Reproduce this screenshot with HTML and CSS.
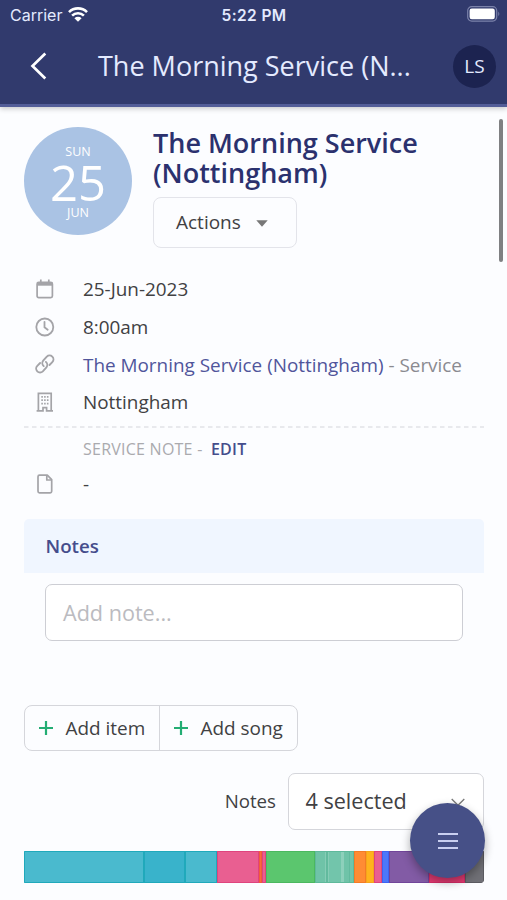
FILE: index.html
```html
<!DOCTYPE html>
<html lang="en">
<head>
<meta charset="utf-8">
<title>The Morning Service (Nottingham)</title>
<link rel="stylesheet" href="styles.css">
</head>
<body>
<div class="app">
  <header class="header">
    <div class="status">
      <div class="carrier"><span>Carrier</span>
        <svg class="wifi" viewBox="0 0 20 15"><path d="M1 5.1a12.8 12.8 0 0 1 18 0M4.1 8.6a8.4 8.4 0 0 1 11.8 0" fill="none" stroke="#fff" stroke-width="2.6"/><path d="M6.4 11.3a5.2 5.2 0 0 1 7.2 0L10 14.8z" fill="#fff"/></svg>
      </div>
      <div class="clock">5:22 PM</div>
      <div class="power"><svg class="battery" viewBox="0 0 34 16"><rect x=".7" y=".7" width="29" height="14.4" rx="4" fill="none" stroke="#7b82aa" stroke-width="1.2"/><rect x="2.6" y="2.6" width="25.2" height="10.6" rx="2.2" fill="#fff"/><path d="M31.3 5.5q2 2.4 0 4.8z" fill="#7b82aa"/></svg></div>
    </div>
    <div class="nav">
      <svg class="back" viewBox="0 0 18 28"><path d="M15.3 1.5 2.5 14l12.8 12.5" fill="none" stroke="#fff" stroke-width="2.7"/></svg>
      <div class="nav-title">The Morning Service (N...</div>
      <div class="avatar">LS</div>
    </div>
  </header>
  <main class="content">
    <section class="hero">
      <div class="date-badge"><span class="small">SUN</span><span class="day">25</span><span class="small">JUN</span></div>
      <div class="hero-text">
        <h1>The Morning Service<br>(Nottingham)</h1>
        <button class="actions"><span>Actions</span><svg class="caret" viewBox="0 0 12 7"><path d="M.3.3h11.4L6 6.7z" fill="#777"/></svg></button>
      </div>
    </section>
    <section class="details">
      <div class="row"><svg class="icon" viewBox="0 0 20 20"><g fill="none" stroke="#a4a4a8" stroke-width="1.7"><rect x="2.1" y="3.3" width="15.3" height="15.4" rx="1.6"/><path d="M2 5.2h15.5" stroke-width="3"/><path d="M5.8.5v4M13.8.5v4"/></g></svg><span>25-Jun-2023</span></div>
      <div class="row"><svg class="icon" viewBox="0 0 20 20"><g fill="none" stroke="#a4a4a8" stroke-width="1.8"><circle cx="9.8" cy="10" r="8.5"/><path d="M9.5 4.8v5.4l3.2 2.5" stroke-linecap="round"/></g></svg><span>8:00am</span></div>
      <div class="row"><svg class="icon" viewBox="0 0 20 20"><g fill="none" stroke="#a4a4a8" stroke-width="1.9" stroke-linecap="round"><path d="M8.7 12.1a4 4 0 0 1-.5-5.5l3.6-3.9a3.85 3.85 0 0 1 5.5 5.5l-2.8 2.8"/><path d="M10.9 7.9a4 4 0 0 1 .5 5.5l-3.6 3.9a3.85 3.85 0 0 1-5.5-5.5L5.1 9"/></g></svg><span class="service"><a>The Morning Service (Nottingham)</a> - Service</span></div>
      <div class="row"><svg class="icon" viewBox="0 0 20 20"><g fill="none" stroke="#a4a4a8"><path d="M3.4 18V1.4h12.8V18M1.6 18.9H8v-3.2h3.6v3.2H18" stroke-width="1.7"/><path d="M6.3 4.8h7.2M6.3 8.2h7.2M6.3 11.6h7.2" stroke-width="1.8" stroke-dasharray="1.6 1.2"/></g></svg><span>Nottingham</span></div>
    </section>
    <svg class="rule" viewBox="0 0 460 2"><path d="M0 1h460" stroke="#e1e2e7" stroke-width="1.4" stroke-dasharray="4.5 3.5"/></svg>
    <div class="note-label">SERVICE NOTE - <b>EDIT</b></div>
    <div class="row note-row"><svg class="icon" viewBox="0 0 20 20"><g fill="none" stroke="#a4a4a8" stroke-width="1.7" stroke-linejoin="round"><path d="M12.3 1.2H4.5q-1.5 0-1.5 1.5v14.6q0 1.5 1.5 1.5h10.7q1.5 0 1.5-1.5V5.6z"/><path d="M11.8 1.4V6h4.8"/></g></svg><span>-</span></div>
    <h2>Notes</h2>
    <div class="note-input">Add note...</div>
    <div class="button-group">
      <button><svg class="plus" viewBox="0 0 14 14"><path d="M7 0v14M0 7h14"/></svg>Add item</button>
      <button><svg class="plus" viewBox="0 0 14 14"><path d="M7 0v14M0 7h14"/></svg>Add song</button>
    </div>
    <div class="filter"><span>Notes</span><div class="select"><span>4 selected</span><svg class="chevron" viewBox="0 0 14 9"><path d="m.7 1 6.3 6.3L13.3 1" fill="none" stroke="#777" stroke-width="1.3"/></svg></div></div>
    <div class="timeline">
      <i class="teal s1"></i><i class="teal dark s2"></i><i class="teal s3"></i><i class="pink s4"></i><i class="tangerine s5"></i><i class="pink s6"></i><i class="green s7"></i><i class="mint s8"></i><i class="orange s9"></i><i class="yellow s10"></i><i class="pink s11"></i><i class="blue s12"></i><i class="purple s13"></i><i class="rose s14"></i><i class="gray s15"></i>
    </div>
  </main>
  <div class="scrollbar"></div>
  <button class="fab" aria-label="Menu"><svg viewBox="0 0 20 16"><path d="M0 1h20M0 8h20M0 15h20" stroke="#c9cff0" stroke-width="2"/></svg></button>
</div>
</body>
</html>
```
FILE: styles.css
```css
* { box-sizing: border-box; }
body { margin: 0; font-family: "Open Sans", sans-serif; color: #414143; background: #fcfdff; }
button { font: inherit; color: inherit; padding: 0; background: none; border: 0; }
svg { display: block; flex: none; }
.app { position: relative; width: 507px; height: 900px; overflow: hidden; }
.header { height: 107px; background: #313a6d; border-bottom: 3px solid #535d98; box-shadow: 0 2px 5px #0003; color: #e4eaff; }
.status { display: grid; grid-template-columns: 1fr 1fr 1fr; align-items: center; height: 30px; padding: 0 6px 0 10px; font-family: Inter, sans-serif; font-size: 16px; }
.carrier { display: flex; align-items: center; gap: 6px; }
.wifi { width: 20px; height: 15px; margin-top: -1px; }
.clock { text-align: center; font-weight: 600; font-size: 15.5px; letter-spacing: .4px; margin-left: -3px; }
.power { display: flex; justify-content: flex-end; }
.battery { width: 34px; height: 16px; margin-top: -2px; }
.nav { display: flex; align-items: center; height: 72px; padding: 0 11px 0 30px; }
.back { width: 18px; height: 28px; }
.nav-title { margin-left: 50px; flex: 1; font-size: 27px; line-height: 36px; white-space: nowrap; }
.avatar { width: 43px; height: 43px; border-radius: 50%; background: #1c2350; display: flex; align-items: center; justify-content: center; font-size: 19px; font-weight: 500; }
.content { padding: 20px 23px 0 24px; }
.hero { display: flex; height: 121px; }
.date-badge { width: 108px; height: 108px; border-radius: 50%; background: #aac3e4; color: #fff; display: flex; flex-direction: column; align-items: center; padding-top: 17px; }
.small { font-size: 12.5px; line-height: 15px; }
.day { font-size: 49px; line-height: 46px; }
.hero-text { margin-left: 21px; }
h1 { margin: 1px 0 9px; font-size: 27px; line-height: 30px; font-weight: 600; color: #2b316e; white-space: nowrap; }
.actions { width: 144px; height: 51px; border: 1.5px solid #e3e4ea; border-radius: 8px; display: flex; align-items: center; padding-left: 22px; gap: 15px; font-size: 19px; }
.actions span { margin-top: -1px; }
.caret { width: 12px; height: 7px; margin-top: 1px; }
.details { padding-top: 22.4px; }
.row { display: flex; align-items: center; height: 37.75px; padding-left: 11px; font-size: 18.9px; }
.icon { width: 20px; height: 20px; margin-right: 28px; }
.details .icon { margin-top: -1px; }
.row span { white-space: nowrap; margin-top: -.5px; }
.service { color: #8a8a90; }
.service a { color: #50559b; }
.rule { width: 460px; height: 2px; margin-top: 4.6px; }
.note-label { padding-left: 59px; margin-top: 9px; font-size: 16px; line-height: 24px; font-weight: 500; letter-spacing: .24px; color: #aaaaae; }
.note-label b { margin-left: 4px; font-weight: 600; color: #454d8c; }
.note-row { margin-top: 4px; }
h2 { margin: 16px 0 0; height: 54px; border-radius: 5px 5px 0 0; background: #f0f6ff; padding-left: 21.5px; font-size: 18.7px; line-height: 54px; font-weight: 600; color: #454d8c; }
.note-input { height: 57px; margin: 11px 21.5px 0 21px; border: 1.5px solid #cdced4; border-radius: 7px; background: #fff; padding-left: 17px; font-size: 21.6px; line-height: 56px; color: #bbbbc0; }
.button-group { margin-top: 64px; width: 274px; height: 46px; display: flex; border: 1.5px solid #d5d6db; border-radius: 8px; }
.button-group button { width: 137px; display: flex; align-items: center; padding-left: 14px; font-size: 18.95px; white-space: nowrap; }
.button-group button:first-child { width: 135px; border-right: 1.5px solid #d5d6db; }
.plus { width: 14px; height: 14px; margin-right: 12.5px; stroke: #23ad73; stroke-width: 2.2; }
.filter { display: flex; justify-content: flex-end; align-items: center; margin-top: 22px; gap: 12px; font-size: 18.7px; }
.filter span { margin-top: -2px; }
.select { width: 196px; height: 57px; display: flex; align-items: center; justify-content: space-between; border: 1.5px solid #d5d6db; border-radius: 7px; background: #fff; padding: 0 18px 0 16.5px; font-size: 21.6px; }
.chevron { width: 14px; height: 9px; margin-top: 2px; }
.timeline { display: flex; height: 32px; margin-top: 21px; border-radius: 1px 1px 4px 1px; overflow: hidden; }
.timeline i { display: block; flex: none; background: var(--fill); border: 1px solid var(--edge); }
.teal { --fill: #4abace; --edge: #20a9bb; }
.dark { --fill: #39b3cb; }
.pink { --fill: #e95f91; --edge: #df447e; }
.tangerine { --fill: #ff653f; --edge: #f15b39; }
.green { --fill: #5bc66e; --edge: #4bb85f; }
.mint { --fill: #6fc3a8; --edge: #5eb99b; }
.orange { --fill: #ff8c34; --edge: #f37c26; }
.yellow { --fill: #ffb31d; --edge: #f5a51b; }
.blue { --fill: #4c78fb; --edge: #3c63f2; }
.purple { --fill: #825ba5; --edge: #71459a; }
.rose { --fill: #e53b73; --edge: #d52d67; }
.gray { --fill: #707076; --edge: #5b5b61; }
.s1 { width: 120px; } .s2 { width: 41px; } .s3 { width: 32px; } .s4 { width: 42px; }
.s5 { width: 3px; } .s6 { width: 4px; } .s7 { width: 49px; }
.timeline .s8 { width: 39px; background: linear-gradient(90deg, #6fc3a8 9px, #86cdb6 9px 10px, #62ba9e 10px 12px, #86cdb6 12px 13px, #72c5ab 13px 25px, #8dd0bb 25px 28px, #6fc3a8 28px 33px, #62ba9e 33px 34px, #72c5ab 34px); }
.s9 { width: 12px; } .s10 { width: 8px; } .s11 { width: 8px; } .s12 { width: 7px; }
.s13 { width: 40px; } .s14 { width: 36px; } .s15 { width: 19px; }
.scrollbar { position: absolute; left: 499px; top: 119px; width: 4px; height: 143px; border-radius: 2px; background: #7f8082; }
.fab { position: absolute; left: 410px; top: 803px; width: 75px; height: 75px; border-radius: 50%; background: #465087; box-shadow: 0 4px 10px #0005; display: flex; align-items: center; justify-content: center; }
.fab svg { width: 20px; height: 16px; }
```
